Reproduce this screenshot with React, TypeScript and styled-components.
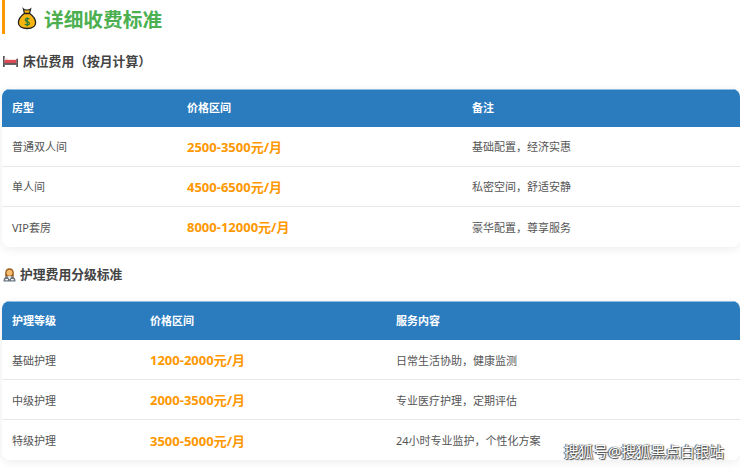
import React from "react";
import styled, {createGlobalStyle} from "styled-components";

type Row = {name: string, price: string, note: string};

const bedRows: Row[] = [
  {name: "普通双人间", price: "2500-3500元/月", note: "基础配置，经济实惠"},
  {name: "单人间", price: "4500-6500元/月", note: "私密空间，舒适安静"},
  {name: "VIP套房", price: "8000-12000元/月", note: "豪华配置，尊享服务"},
];

const careRows: Row[] = [
  {name: "基础护理", price: "1200-2000元/月", note: "日常生活协助，健康监测"},
  {name: "中级护理", price: "2000-3500元/月", note: "专业医疗护理，定期评估"},
  {name: "特级护理", price: "3500-5000元/月", note: "24小时专业监护，个性化方案"},
];

const MoneyBag = () => (
  <svg width="20" height="23" viewBox="0 0 22 24">
    <path d="M7 1.5 C8.5 3 13 3 15 1.5 L13.8 6.5 H8.2 Z" fill="#f5b014" stroke="#222" strokeWidth="1.3" />
    <path d="M8 6.5 H14 C18 9.5 20.5 13 20.5 16.5 C20.5 21 16.5 23 11 23 C5.5 23 1.5 21 1.5 16.5 C1.5 13 4 9.5 8 6.5 Z" fill="#f7b512" stroke="#222" strokeWidth="1.4" />
    <path d="M13.6 12.6 C12.8 11.6 9 11.4 9 13.6 C9 16 13.6 15 13.6 17.4 C13.6 19.4 9.8 19.4 8.6 18.2 M11.2 10.5 V20.4" fill="none" stroke="#1f7a3a" strokeWidth="1.3" />
  </svg>
);

const Bed = () => (
  <svg width="15" height="11" viewBox="0 0 16 12">
    <rect x="0" y="0" width="1.6" height="12" fill="#333" />
    <rect x="14.4" y="3" width="1.6" height="9" fill="#333" />
    <rect x="1.6" y="2" width="3.6" height="3" fill="#f4ece4" />
    <path d="M1.6 4.2 H14.4 V7.8 H1.6 Z" fill="#dd4a55" />
    <rect x="1.6" y="7.8" width="12.8" height="1.8" fill="#444" />
  </svg>
);

const Nurse = () => (
  <svg width="13" height="16" viewBox="0 0 14 16">
    <path d="M2.4 6.5 C2.4 0.3 11.6 0.3 11.6 6.5 V11 H2.4 Z" fill="#9a5a1c" />
    <circle cx="7" cy="6.6" r="3.2" fill="#f6bd6e" />
    <path d="M0.5 16 C0.5 11.5 3.5 10.2 7 10.2 C10.5 10.2 13.5 11.5 13.5 16 Z" fill="#6b7580" />
    <path d="M4.6 10.3 L7 13.8 L9.4 10.3 Z" fill="#f2f4f6" />
    <rect x="2.4" y="13.4" width="3" height="1.4" fill="#f2f4f6" />
    <rect x="8.6" y="13.4" width="3" height="1.4" fill="#f2f4f6" />
  </svg>
);

const FeeTable = ({
  headers,
  rows,
  widths,
  tall,
} : {
  headers: string[],
  rows: Row[],
  widths: number[],
  tall?: boolean,
}) => (
  <StyledTable>
    <colgroup>
      {widths.map(w => <col key={w} width={w} />)}
    </colgroup>
    <thead>
      <tr>
        {headers.map(h => <StyledTh key={h} $tall={tall}>{h}</StyledTh>)}
      </tr>
    </thead>
    <tbody>
      {rows.map(row => (
        <StyledRow key={row.name}>
          <StyledTd $tall={tall}>{row.name}</StyledTd>
          <StyledTd $tall={tall}><StyledPrice>{row.price}</StyledPrice></StyledTd>
          <StyledTd $tall={tall}>{row.note}</StyledTd>
        </StyledRow>
      ))}
    </tbody>
  </StyledTable>
);

export default function App() {
  return (
    <StyledPage>
      <GlobalStyle />
      <StyledTitle>
        <MoneyBag />
        详细收费标准
      </StyledTitle>
      <StyledBedHeading>
        <Bed />
        床位费用（按月计算）
      </StyledBedHeading>
      <FeeTable headers={["房型", "价格区间", "备注"]} rows={bedRows} widths={[175, 285, 278]} />
      <StyledCareHeading>
        <Nurse />
        护理费用分级标准
      </StyledCareHeading>
      <FeeTable tall headers={["护理等级", "价格区间", "服务内容"]} rows={careRows} widths={[138, 246, 354]} />
      <StyledWatermark>搜狐号@搜狐黑点白银站</StyledWatermark>
    </StyledPage>
  );
}

const GlobalStyle = createGlobalStyle`
  html, body {
    margin: 0;
    background: #fff;
  }
  body {
    font-family: "Noto Sans", "Noto Sans CJK SC", sans-serif;
    color: #333;
  }
`;

const StyledPage = styled.div`
  position: relative;
  width: 740px;
  height: 468px;
  overflow: hidden;
  box-sizing: border-box;
  padding-left: 2px;
`;

const StyledTitle = styled.h2`
  display: flex;
  align-items: center;
  gap: 7px;
  height: 34px;
  box-sizing: border-box;
  margin: 0;
  padding: 3px 0 0 12px;
  border-left: 3px solid #ff9800;
  font-size: 19.7px;
  font-weight: 700;
  color: #4caf50;
`;

const StyledHeading = styled.h3`
  display: flex;
  align-items: center;
  height: 20px;
  margin: 0;
  font-size: 12.8px;
  line-height: 20px;
  font-weight: 700;
  color: #444;
`;

const StyledBedHeading = styled(StyledHeading)`
  gap: 5px;
  margin-top: 17px;
  margin-bottom: 18px;
  padding-left: 1px;
`;

const StyledCareHeading = styled(StyledHeading)`
  gap: 4px;
  margin-top: 17px;
  margin-bottom: 17px;
  padding-left: 1px;
`;

const StyledTable = styled.table`
  width: 738px;
  table-layout: fixed;
  border-collapse: separate;
  border-spacing: 0;
  border-radius: 8px;
  overflow: hidden;
  background: #fff;
  box-shadow: 0 2px 10px rgba(0, 0, 0, 0.08);
  font-size: 11px;
`;

const StyledTh = styled.th<{$tall?: boolean}>`
  height: ${(x) => (x.$tall ? 39 : 38)}px;
  padding: 0 10px ${(x) => (x.$tall ? 2 : 3)}px;
  box-sizing: border-box;
  background: #2b7cbf;
  border-top: 1px solid #8fbde0;
  color: #fff;
  font-weight: 700;
  font-size: 11px;
  text-align: left;
`;

const StyledRow = styled.tr`
  &:not(:last-child) td {
    border-bottom: 1px solid #e8e8e8;
  }
`;

const StyledTd = styled.td<{$tall?: boolean}>`
  height: 40px;
  box-sizing: border-box;
  padding: 0 10px ${(x) => (x.$tall ? 0 : 1)}px;
  color: #555;
  background: #fff;
`;

const StyledPrice = styled.span`
  font-size: 13px;
  font-weight: 700;
  color: #ff9800;
`;

const StyledWatermark = styled.div`
  position: absolute;
  right: 16px;
  bottom: 8px;
  font-size: 14.7px;
  line-height: 18px;
  color: #fff;
  text-shadow: 0 0 1px #333, 1px 1px 1px #444, -1px 0 1px #555;
`;
